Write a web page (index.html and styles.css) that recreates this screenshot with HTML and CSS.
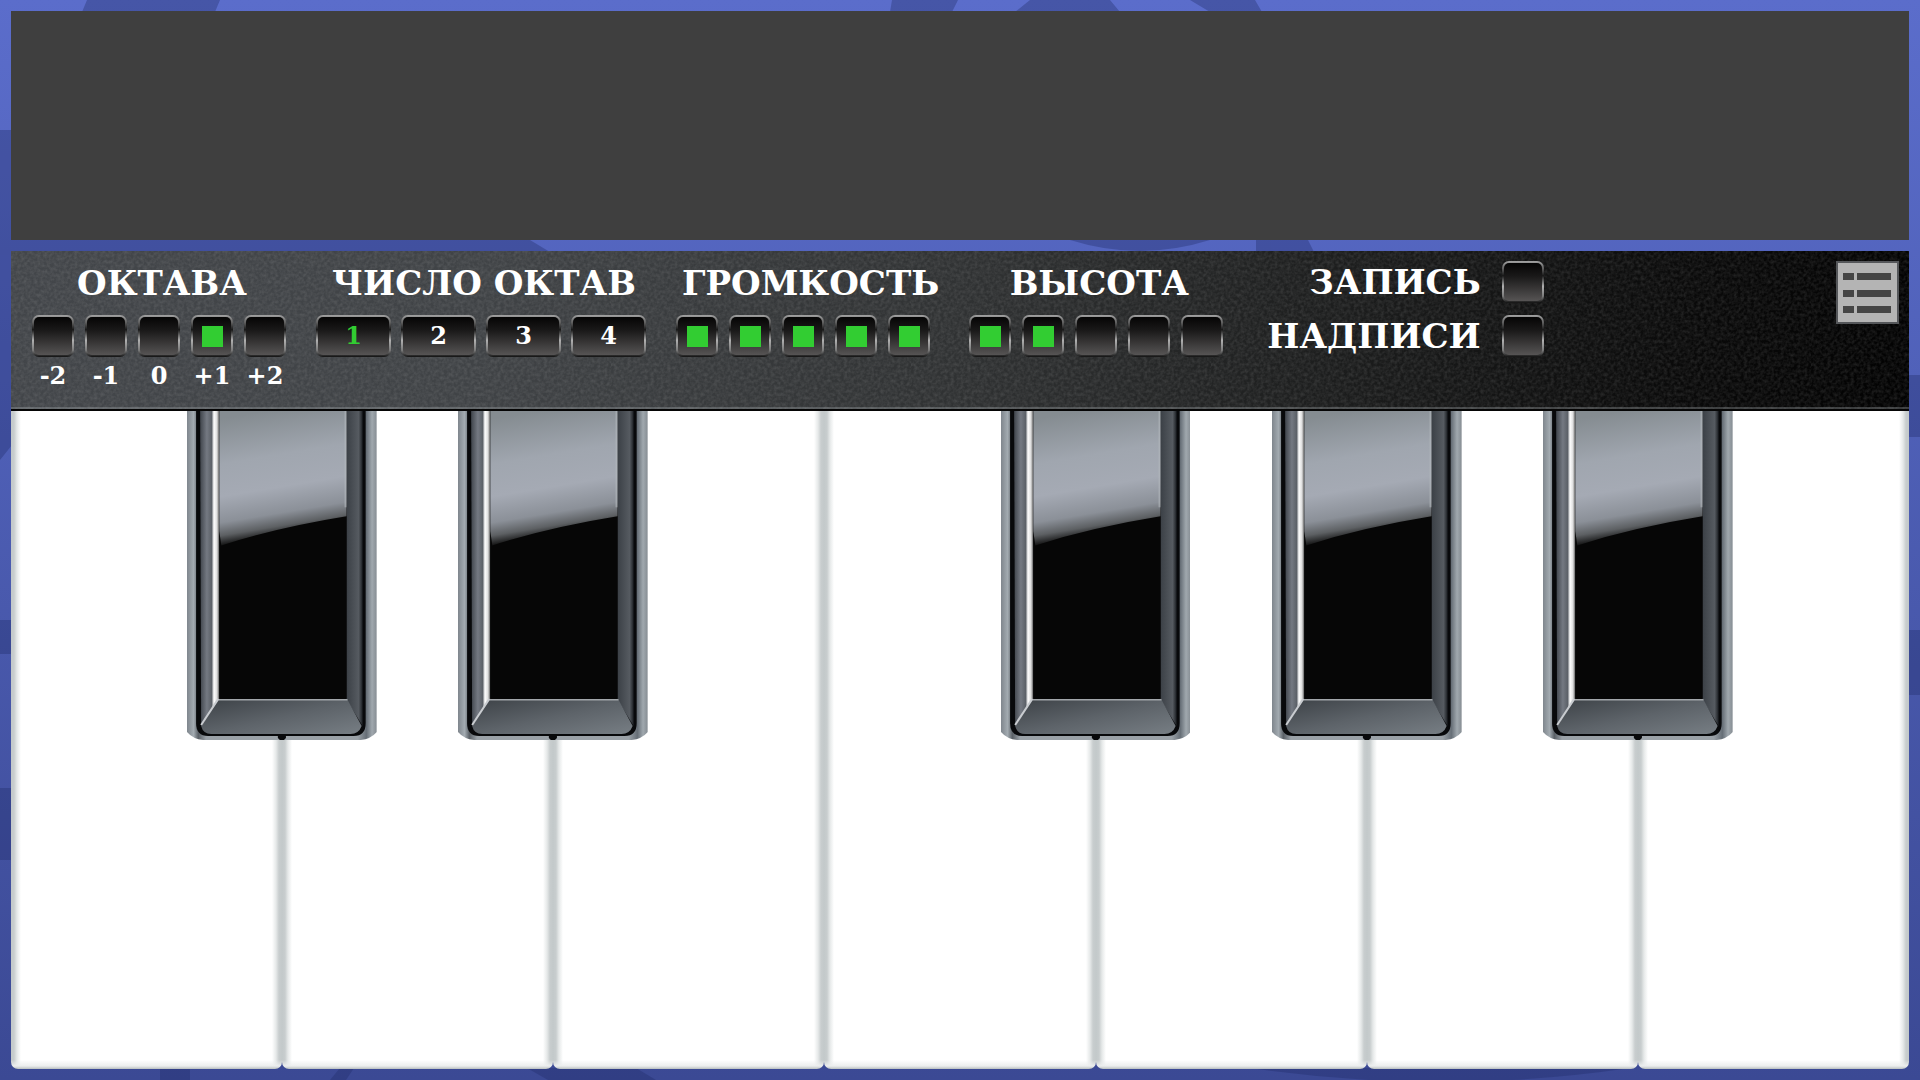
FILE: index.html
```html
<!DOCTYPE html>
<html lang="ru">
<head>
  <meta charset="UTF-8">
  <meta name="viewport" content="width=device-width, initial-scale=1.0">
  <title>Пианино</title>
  <link rel="stylesheet" href="styles.css">
</head>
<body>

<!-- Backdrop -->
<svg class="backdrop" viewBox="0 0 1920 1080" preserveAspectRatio="none" aria-hidden="true">
  <defs>
    <linearGradient id="sky" x1="0" y1="0" x2="0" y2="1">
      <stop offset="0" stop-color="#5b6dcb"/>
      <stop offset=".35" stop-color="#5061b9"/>
      <stop offset="1" stop-color="#3b4994"/>
    </linearGradient>
  </defs>
  <rect width="1920" height="1080" fill="url(#sky)"/>
  <g fill="#202c66" opacity=".35">
    <path d="M87 0H220L215 12H82ZM892 0H958L952 12H890ZM1030 0H1110L1120 12H1015ZM1190 0H1255L1262 12H1210Z"/>
    <path d="M0 130H12V445L0 460ZM12 240H530L550 252H12ZM1070 240H1210Q1140 262 1070 240ZM1256 240H1308L1314 252H1256Z"/>
    <path d="M0 620H12V654H0ZM0 788H12V860H0Z"/>
    <path d="M1908 375H1920V437H1908ZM1908 630H1920V695H1908Z"/>
    <path d="M160 1068H190V1080H160ZM340 1068H354L346 1080H330ZM527 1068H636L656 1080H548ZM1250 1068H1630Q1440 1096 1250 1068Z"/>
  </g>
</svg>

<!-- Black key drawing -->
<svg width="0" height="0" class="defs" aria-hidden="true">
  <defs>
    <linearGradient id="edge">
      <stop offset="0" stop-color="#7f868d"/>
      <stop offset=".035" stop-color="#a3abb1"/>
      <stop offset=".06" stop-color="#5a6066"/>
      <stop offset=".1" stop-color="#9aa1a7"/>
      <stop offset=".9" stop-color="#9aa1a7"/>
      <stop offset=".945" stop-color="#666e76"/>
      <stop offset=".975" stop-color="#a0a8ae"/>
      <stop offset="1" stop-color="#858c92"/>
    </linearGradient>
    <linearGradient id="leftBevel">
      <stop offset="0" stop-color="#40454c"/>
      <stop offset=".35" stop-color="#747982"/>
      <stop offset=".6" stop-color="#5c6168"/>
      <stop offset=".72" stop-color="#fff"/>
      <stop offset=".88" stop-color="#ddd"/>
      <stop offset="1" stop-color="#555"/>
    </linearGradient>
    <linearGradient id="rightBevel">
      <stop offset="0" stop-color="#3b4046"/>
      <stop offset=".75" stop-color="#565b61"/>
      <stop offset="1" stop-color="#1b1e22"/>
    </linearGradient>
    <linearGradient id="foot" x1="0" y1="0" x2="1" y2="1">
      <stop offset="0" stop-color="#3d4247"/>
      <stop offset=".5" stop-color="#5d6369"/>
      <stop offset="1" stop-color="#777e84"/>
    </linearGradient>
    <linearGradient id="gloss" gradientUnits="userSpaceOnUse" x1="80" y1="0" x2="101" y2="126">
      <stop offset="0" stop-color="#858c91"/>
      <stop offset=".35" stop-color="#a0a6af"/>
      <stop offset=".6" stop-color="#a5aab4"/>
      <stop offset=".8" stop-color="#8b9098"/>
      <stop offset=".9" stop-color="#5d6063"/>
      <stop offset=".98" stop-color="#101010"/>
    </linearGradient>
    <symbol id="blackKey" viewBox="0 0 188 328" preserveAspectRatio="none">
      <path d="M0 0H188V320Q182 327 172 328H16Q6 327 0 320Z" fill="url(#edge)"/>
      <path d="M9 0H177V311Q177 324 165 324H21Q9 324 9 311Z" fill="#08090b"/>
      <path d="M13 0H32V288L14 314Z" fill="url(#leftBevel)"/>
      <path d="M158 0H174V314L158 288Z" fill="url(#rightBevel)"/>
      <path d="M31 288H159L173 314Q170 322 162 322H24Q16 322 14 314Z" fill="url(#foot)"/>
      <path d="M31 288H159" stroke="#a2a6aa" stroke-width="1.5"/>
      <path d="M31 287L14 313" stroke="#c9ccd0" stroke-width="2"/>
      <path d="M32 0H158V287H32Z" fill="#060606"/>
      <path d="M32 0H158V105Q90 116 34 134L32 120Z" fill="url(#gloss)"/>
      <path d="M157 0V96" stroke="#b3b8bd" stroke-width="2" opacity=".6"/>
      <path d="M90 323H98V326L96 328H92L90 326Z" fill="#08090b"/>
    </symbol>
  </defs>
</svg>

<main class="app">
  <section class="screen"></section>

  <section class="piano">
    <div class="toolbar">
      <fieldset class="group">
        <legend>ОКТАВА</legend>
        <div class="row">
          <label class="step"><input type="radio" name="octave" class="led"><span>-2</span></label>
          <label class="step"><input type="radio" name="octave" class="led"><span>-1</span></label>
          <label class="step"><input type="radio" name="octave" class="led"><span>0</span></label>
          <label class="step"><input type="radio" name="octave" class="led" checked><span>+1</span></label>
          <label class="step"><input type="radio" name="octave" class="led"><span>+2</span></label>
        </div>
      </fieldset>

      <fieldset class="group">
        <legend>ЧИСЛО ОКТАВ</legend>
        <div class="row count">
          <button type="button" class="num active">1</button>
          <button type="button" class="num">2</button>
          <button type="button" class="num">3</button>
          <button type="button" class="num">4</button>
        </div>
      </fieldset>

      <fieldset class="group">
        <legend>ГРОМКОСТЬ</legend>
        <div class="row level">
          <input type="checkbox" class="led" aria-label="Громкость 1" checked>
          <input type="checkbox" class="led" aria-label="Громкость 2" checked>
          <input type="checkbox" class="led" aria-label="Громкость 3" checked>
          <input type="checkbox" class="led" aria-label="Громкость 4" checked>
          <input type="checkbox" class="led" aria-label="Громкость 5" checked>
        </div>
      </fieldset>

      <fieldset class="group">
        <legend>ВЫСОТА</legend>
        <div class="row level">
          <input type="checkbox" class="led" aria-label="Высота 1" checked>
          <input type="checkbox" class="led" aria-label="Высота 2" checked>
          <input type="checkbox" class="led" aria-label="Высота 3">
          <input type="checkbox" class="led" aria-label="Высота 4">
          <input type="checkbox" class="led" aria-label="Высота 5">
        </div>
      </fieldset>

      <div class="switches">
        <label>ЗАПИСЬ <input type="checkbox" class="led"></label>
        <label>НАДПИСИ <input type="checkbox" class="led"></label>
      </div>

      <button type="button" class="menu" aria-label="Меню">
        <svg viewBox="0 0 63 63">
          <rect width="63" height="63" fill="#55575a"/>
          <rect x="2" y="2" width="59" height="59" fill="#b4b4b4"/>
          <path d="M7 12H18V19H7ZM21 12H55V19H21ZM7 29H18V36H7ZM21 29H55V36H21ZM7 45H18V52H7ZM21 45H55V52H21Z" fill="#454545"/>
        </svg>
      </button>
    </div>

    <div class="keys">
      <div class="slot">
        <button type="button" class="white" aria-label="До"></button>
        <button type="button" class="black" aria-label="До диез"><svg><use href="#blackKey"/></svg></button>
      </div>
      <div class="slot">
        <button type="button" class="white" aria-label="Ре"></button>
        <button type="button" class="black" aria-label="Ре диез"><svg><use href="#blackKey"/></svg></button>
      </div>
      <div class="slot">
        <button type="button" class="white" aria-label="Ми"></button>
      </div>
      <div class="slot">
        <button type="button" class="white" aria-label="Фа"></button>
        <button type="button" class="black" aria-label="Фа диез"><svg><use href="#blackKey"/></svg></button>
      </div>
      <div class="slot">
        <button type="button" class="white" aria-label="Соль"></button>
        <button type="button" class="black" aria-label="Соль диез"><svg><use href="#blackKey"/></svg></button>
      </div>
      <div class="slot">
        <button type="button" class="white" aria-label="Ля"></button>
        <button type="button" class="black" aria-label="Ля диез"><svg><use href="#blackKey"/></svg></button>
      </div>
      <div class="slot">
        <button type="button" class="white" aria-label="Си"></button>
      </div>
    </div>
  </section>
</main>

<script>
  document.querySelectorAll('.num').forEach(btn => {
    btn.addEventListener('click', () => {
      document.querySelector('.num.active').classList.remove('active');
      btn.classList.add('active');
    });
  });

  // a level row is lit up to the light that was clicked
  document.querySelectorAll('.level').forEach(row => {
    const leds = [...row.querySelectorAll('.led')];
    leds.forEach((led, i) => {
      led.addEventListener('click', () => {
        leds.forEach((l, j) => setTimeout(() => l.checked = j <= i));
      });
    });
  });
</script>

</body>
</html>
```
FILE: styles.css
```css
* { box-sizing: border-box; }
body {
  margin: 0;
  background: #4a5bb0;
  color: #fff;
  font-family: "DejaVu Serif", serif;
  font-weight: bold;
}
button {
  padding: 0;
  border: none;
  font: inherit;
  color: inherit;
  cursor: pointer;
}
.backdrop {
  position: fixed;
  inset: 0;
  width: 100%;
  height: 100%;
  z-index: -1;
}
.defs {
  position: absolute;
}
.app {
  display: flex;
  flex-direction: column;
  gap: 11px;
  min-height: 100vh;
  padding: 11px;
}
.screen {
  flex: 7 1 0;
  background: #3f3f3f;
}
.piano {
  flex: 25 1 0;
  display: flex;
  flex-direction: column;
  overflow: hidden;
}

/* Toolbar */
.toolbar {
  display: flex;
  align-items: flex-start;
  height: 160px;
  padding: 10px 10px 0 21px;
  gap: 30px;
  background:
    url("data:image/svg+xml,%3Csvg xmlns='http://www.w3.org/2000/svg' width='300' height='160'%3E%3Cfilter id='n'%3E%3CfeTurbulence type='fractalNoise' baseFrequency='.3' numOctaves='2' stitchTiles='stitch'/%3E%3CfeColorMatrix values='0 0 0 0 .6 0 0 0 0 .6 0 0 0 0 .6 .25 0 0 0 -.08'/%3E%3C/filter%3E%3Crect width='300' height='160' filter='url(%23n)'/%3E%3C/svg%3E"),
    linear-gradient(98deg, #43464a 0%, #404346 25%, #303233 50%, #1c1d1d 70%, #0a0a0a 88%, #020202 100%);
  border-bottom: 2px solid #050505;
  box-shadow: inset 0 -2px 0 rgba(160,165,170,0.35);
}
.group {
  display: flex;
  flex-direction: column;
  min-width: 0;
  margin: 0;
  padding: 0;
  border: none;
}
legend {
  width: 100%;
  padding: 0 0 0 6px;
  margin-bottom: 10px;
  font-size: 34px;
  line-height: 44px;
  text-align: center;
  white-space: nowrap;
}
.row {
  display: flex;
  gap: 11px;
}
.row.count {
  gap: 10px;
}
.step {
  display: flex;
  flex-direction: column;
  align-items: center;
  width: 42px;
  font-size: 24px;
  line-height: 38px;
  white-space: nowrap;
}
.led, .num {
  appearance: none;
  flex: none;
  width: 42px;
  height: 42px;
  margin: 0;
  border: 2px solid transparent;
  border-radius: 7px;
  background:
    linear-gradient(#050505, #1a1919 35%, #565454) padding-box,
    linear-gradient(#a2a2a2 0%, #777 12%, #181818 35%, #b0b0b0 60%, #777 85%, #111 100%) border-box;
  cursor: pointer;
}
.led:checked {
  background:
    linear-gradient(#32cd32, #32cd32) center / 21px 21px no-repeat,
    linear-gradient(#050505, #1a1919 35%, #565454) padding-box,
    linear-gradient(#a2a2a2 0%, #777 12%, #181818 35%, #b0b0b0 60%, #777 85%, #111 100%) border-box;
}
.num {
  width: 75px;
  font-size: 24px;
  line-height: 38px;
}
.num.active {
  color: #32cd32;
}
.switches {
  display: flex;
  flex-direction: column;
  gap: 12px;
  margin-left: 14px;
}
.switches label {
  display: flex;
  justify-content: flex-end;
  align-items: center;
  gap: 21px;
  font-size: 34px;
  line-height: 42px;
}
.menu {
  width: 63px;
  height: 63px;
  margin-left: auto;
  background: none;
}
.menu svg {
  display: block;
}

/* Keyboard */
.keys {
  flex: 1;
  display: grid;
  grid-template-columns: repeat(7, 1fr);
}
.slot {
  position: relative;
  display: grid;
}
.white {
  border-radius: 0 0 7px 7px;
  background:
    linear-gradient(to top, #b9bfc0, #eceeee 3px, transparent 9px),
    linear-gradient(90deg, #c3c9ca 0, #c8cdce 3px, #e6e9e9 6px, #fff 10px, #fff calc(100% - 10px), #e6e9e9 calc(100% - 6px), #c8cdce calc(100% - 3px), #c3c9ca 100%);
}
.black {
  position: absolute;
  z-index: 1;
  top: 0;
  right: -35%;
  width: 70%;
  height: 50%;
  background: none;
}
.black svg {
  display: block;
  width: 100%;
  height: 100%;
}
```
